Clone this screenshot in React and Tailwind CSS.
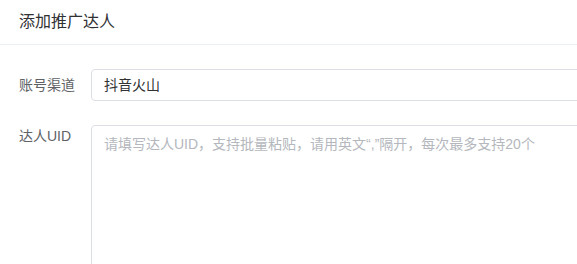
import React, { useState } from 'react';

const font = { fontFamily: '"Liberation Sans", "Noto Sans CJK SC", sans-serif' };

function FormItem({ label, top, children }) {
  return (
    <div className="flex items-start">
      <div className={`w-[72px] shrink-0 text-sm text-[#606266] ${top ? 'leading-5 pt-[1px]' : 'leading-8'}`}>
        {label}
      </div>
      <div className="flex-1">{children}</div>
    </div>
  );
}

export default function App() {
  const [uids, setUids] = useState('');

  return (
    <div className="w-[577px] h-[264px] overflow-hidden bg-white" style={font}>
      <div className="w-[640px]">
        <div className="h-[45px] border-b border-[#ebeef5] pl-[19px] flex items-center pb-[1px]">
          <h2 className="text-base text-[#303133] font-normal">添加推广达人</h2>
        </div>
        <div className="pl-[19px] pt-6 flex flex-col gap-6">
          <FormItem label="账号渠道">
            <div className="h-8 border border-[#dcdfe6] rounded bg-white px-3 flex items-center text-sm text-[#303133]">
              抖音火山
            </div>
          </FormItem>
          <FormItem label="达人UID" top>
            <textarea
              value={uids}
              onChange={(e) => setUids(e.target.value)}
              placeholder="请填写达人UID，支持批量粘贴，请用英文“,”隔开，每次最多支持20个"
              className="block w-full h-[170px] resize-none border border-[#dcdfe6] rounded px-3 py-2 text-sm leading-[21px] text-[#303133] placeholder:text-[#b4b7bd] outline-none"
              style={font}
            />
          </FormItem>
        </div>
      </div>
    </div>
  );
}
